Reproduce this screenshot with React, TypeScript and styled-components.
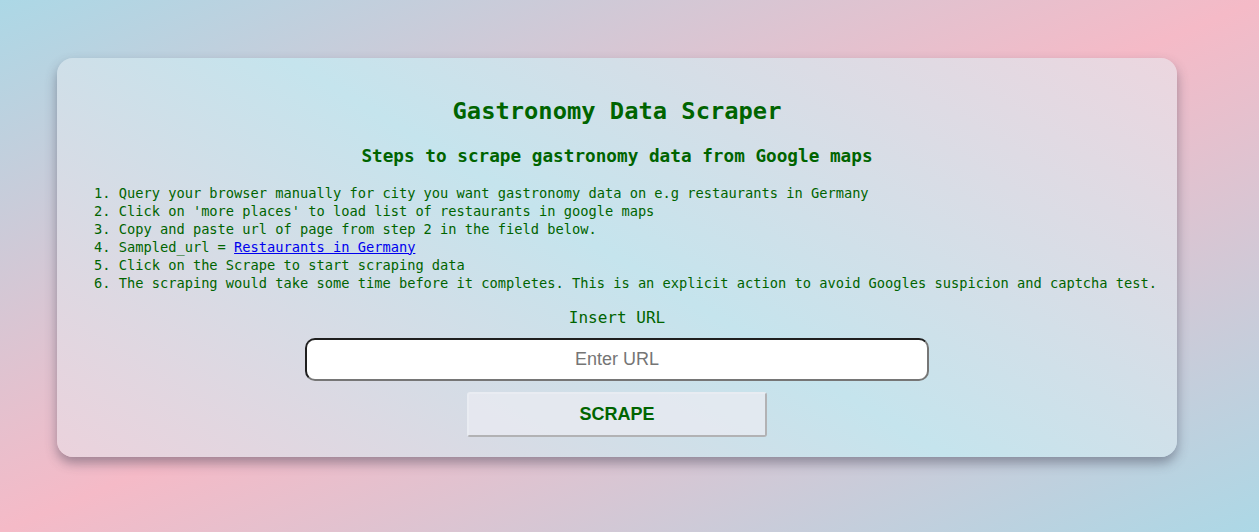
import React, { useState } from 'react';
import styled, { createGlobalStyle } from 'styled-components';

const GlobalStyle = createGlobalStyle`
    html, body {
        margin: 0;
        padding: 0;
    }
    body {
        background: #d4c8d8;
        font-family: "DejaVu Sans Mono", "Liberation Mono", monospace;
    }
`

const Page = styled.div`
    width: 100%;
    height: 532px;
    box-sizing: border-box;
    padding: 58px 0 0 57px;
    background: linear-gradient(to bottom right, #acd8e6 0%, #f5bac7 50%, #acd8e6 100%);
`

const Card = styled.div`
    width: 1120px;
    box-sizing: border-box;
    padding: 39px 20px 20px 20px;
    border-radius: 16px;
    background: linear-gradient(31deg, #ebd2dc 0%, #c5e4ed 50%, #ecd6df 100%);
    box-shadow: 0 6px 12px rgba(60, 60, 80, 0.45);
    display: flex;
    flex-direction: column;
    align-items: center;
    color: #006400;
`

const Title = styled.h1`
    margin: 0;
    font-size: 23.75px;
    line-height: 28px;
    font-weight: bold;
`

const Subtitle = styled.h3`
    margin: 20.6px 0 0 0;
    font-size: 17.7px;
    line-height: 21px;
    font-weight: bold;
`

const Steps = styled.div`
    align-self: stretch;
    margin-top: 17px;
    padding-left: 17px;
    font-size: 13.7px;
    line-height: 18px;
    white-space: pre;
`

const Step = styled.div``

const Link = styled.a`
    color: #0000ee;
    text-decoration: underline;
`

const Label = styled.label`
    margin-top: 16px;
    font-size: 16px;
    line-height: 19px;
`

const UrlInput = styled.input`
    margin-top: 11px;
    width: 624px;
    height: 43px;
    box-sizing: border-box;
    border: 2px solid;
    border-color: #1f1f1f #767676 #767676 #1f1f1f;
    border-radius: 10px;
    background: #fff;
    font-family: "Liberation Sans", Arial, sans-serif;
    font-size: 18px;
    text-align: center;
    outline: none;

    &::placeholder {
        color: #757575;
    }
`

const ScrapeButton = styled.button`
    margin-top: 11px;
    width: 300px;
    height: 45px;
    box-sizing: border-box;
    border: 2px solid;
    border-color: rgba(236, 238, 243, 0.6) #b2b2b4 #b2b2b4 rgba(236, 238, 243, 0.6);
    border-radius: 3px;
    background: rgba(233, 235, 241, 0.75);
    color: #006400;
    font-family: "Liberation Sans", Arial, sans-serif;
    font-size: 18px;
    font-weight: bold;
    cursor: pointer;
`

const App: React.FC = () => {
    const [url, setUrl] = useState('');

    return (
        <>
            <GlobalStyle />
            <Page>
                <Card>
                    <Title>Gastronomy Data Scraper</Title>
                    <Subtitle>Steps to scrape gastronomy data from Google maps</Subtitle>
                    <Steps>
                        <Step>1. Query your browser manually for city you want gastronomy data on e.g restaurants in Germany</Step>
                        <Step>2. Click on 'more places' to load list of restaurants in google maps</Step>
                        <Step>3. Copy and paste url of page from step 2 in the field below.</Step>
                        <Step>4. Sampled_url = <Link href="#">Restaurants in Germany</Link></Step>
                        <Step>5. Click on the Scrape to start scraping data</Step>
                        <Step>6. The scraping would take some time before it completes. This is an explicit action to avoid Googles suspicion and captcha test.</Step>
                    </Steps>
                    <Label htmlFor="url">Insert URL</Label>
                    <UrlInput id="url" placeholder="Enter URL" value={url} onChange={e => setUrl(e.target.value)} />
                    <ScrapeButton>SCRAPE</ScrapeButton>
                </Card>
            </Page>
        </>
    )
}

export default App;
